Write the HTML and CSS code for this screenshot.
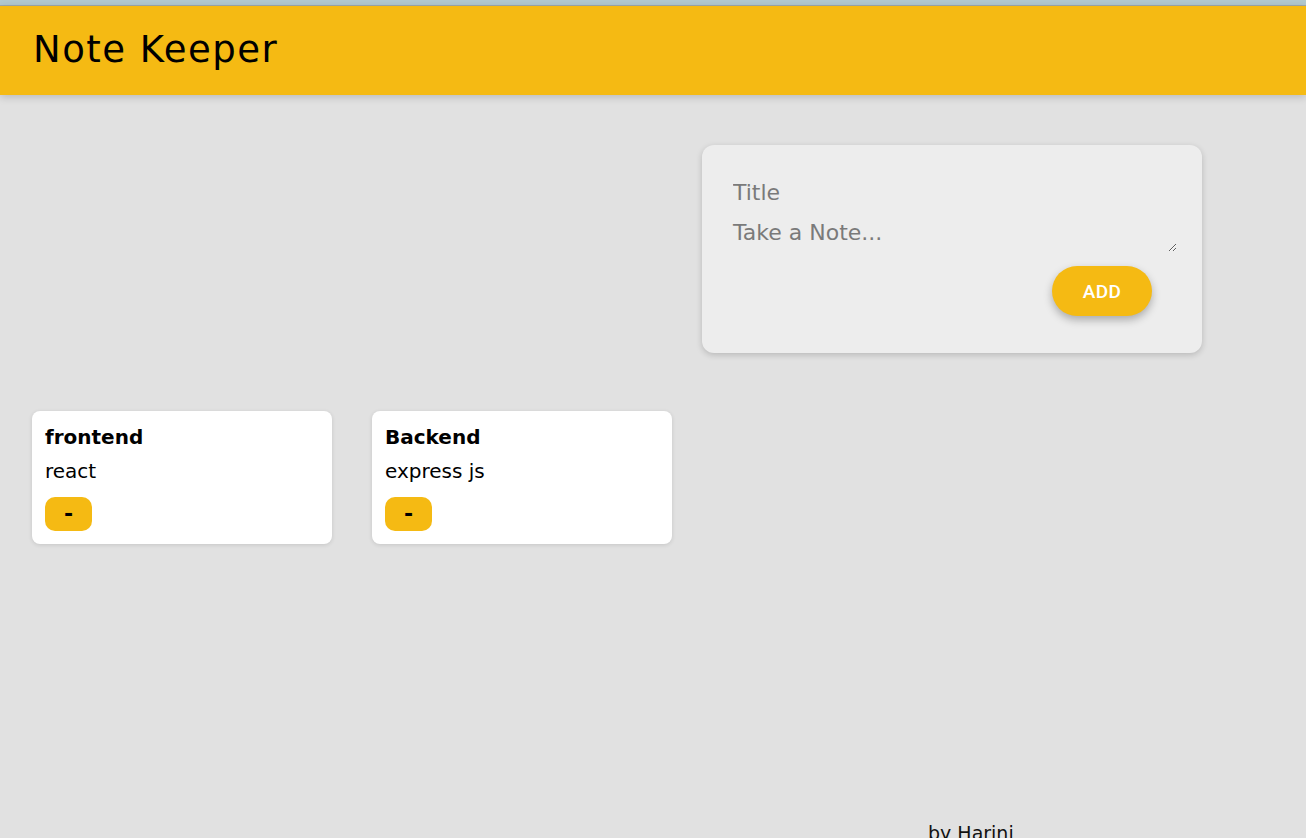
FILE: index.html
```html
<!DOCTYPE html>
<html lang="en">
<head>
<meta charset="utf-8">
<title>Note Keeper</title>
<link rel="stylesheet" href="styles.css">
</head>
<body>
<div class="topstrip"></div>
<header class="app-header">
  <h1 class="app-title">Note Keeper</h1>
</header>
<main class="content">
  <section class="create-wrap">
    <form class="create-note">
      <input class="note-input" type="text" name="title" placeholder="Title">
      <textarea class="note-area" name="content" placeholder="Take a Note..." rows="1"></textarea>
      <div class="add-row">
        <button class="add-btn" type="button">ADD</button>
      </div>
    </form>
  </section>
  <section class="notes">
    <div class="note">
      <h2 class="note-title">frontend</h2>
      <p class="note-body">react</p>
      <button class="del-btn" type="button">-</button>
    </div>
    <div class="note">
      <h2 class="note-title">Backend</h2>
      <p class="note-body">express js</p>
      <button class="del-btn" type="button">-</button>
    </div>
  </section>
</main>
<footer class="footer">
  <p class="footer-text">by Harini</p>
</footer>
</body>
</html>
```
FILE: styles.css
```css
html, body {
  margin: 0;
  padding: 0;
}
body {
  background: #e1e1e1;
  font-family: "DejaVu Sans", "Open Sans", sans-serif;
  color: #000;
}
.topstrip {
  height: 5px;
  background: #b2c9cf;
  border-bottom: 1px solid #9ea9ac;
}
.app-header {
  position: relative;
  z-index: 1;
  background: #f5ba13;
  padding: 22px 33px 23px;
  box-shadow: 0 2px 8px rgba(0, 0, 0, 0.18);
}
.app-title {
  margin: 0;
  font-size: 37px;
  line-height: 44px;
  font-weight: 400;
  letter-spacing: 1.5px;
  color: #000;
}
.content {
  padding: 50px 0 0;
}
.create-wrap {
  display: flex;
  padding-left: 702px;
}
.create-note {
  width: 500px;
  box-sizing: border-box;
  padding: 28px 25px 37px;
  background: #ededed;
  border-radius: 12px;
  box-shadow: 0 2px 6px rgba(0, 0, 0, 0.18);
  display: flex;
  flex-direction: column;
}
.note-input,
.note-area {
  display: block;
  width: 100%;
  box-sizing: border-box;
  border: none;
  outline: none;
  background: transparent;
  font-family: "DejaVu Sans", "Open Sans", sans-serif;
  font-size: 22px;
  line-height: 26px;
  color: #222;
  margin: 0;
}
.note-input {
  padding: 6px;
  height: 38px;
}
.note-area {
  padding: 9px 6px 6px;
  height: 41px;
  resize: vertical;
}
.note-input::placeholder,
.note-area::placeholder {
  color: #7a7a7a;
  opacity: 1;
}
.add-row {
  display: flex;
  justify-content: flex-end;
  padding-right: 25px;
  margin-top: 14px;
}
.add-btn {
  width: 100px;
  height: 50px;
  border: none;
  border-radius: 25px;
  background: #f5ba13;
  color: #fff;
  font-family: Roboto, "Liberation Sans", sans-serif;
  font-size: 19px;
  font-weight: 500;
  letter-spacing: 0.3px;
  box-shadow: 0 4px 9px rgba(0, 0, 0, 0.28);
  cursor: pointer;
}
.notes {
  display: flex;
  gap: 40px;
  padding: 58px 32px 0;
}
.note {
  width: 300px;
  box-sizing: border-box;
  background: #fff;
  border-radius: 8px;
  padding: 14px 13px 13px;
  box-shadow: 0 1px 4px rgba(0, 0, 0, 0.12);
}
.note-title {
  margin: 0;
  font-size: 20px;
  line-height: 24px;
  font-weight: 700;
}
.note-body {
  margin: 10px 0 14px;
  font-size: 20px;
  line-height: 24px;
}
.del-btn {
  display: block;
  width: 47px;
  height: 34px;
  border: none;
  border-radius: 10px;
  background: #f5ba13;
  color: #000;
  font-family: "DejaVu Sans", sans-serif;
  font-size: 22px;
  font-weight: 700;
  line-height: 34px;
  padding: 0;
  cursor: pointer;
}
.footer {
  padding: 277px 0 20px 928px;
}
.footer-text {
  margin: 0;
  font-size: 19px;
  line-height: 24px;
  color: #111;
}
```
